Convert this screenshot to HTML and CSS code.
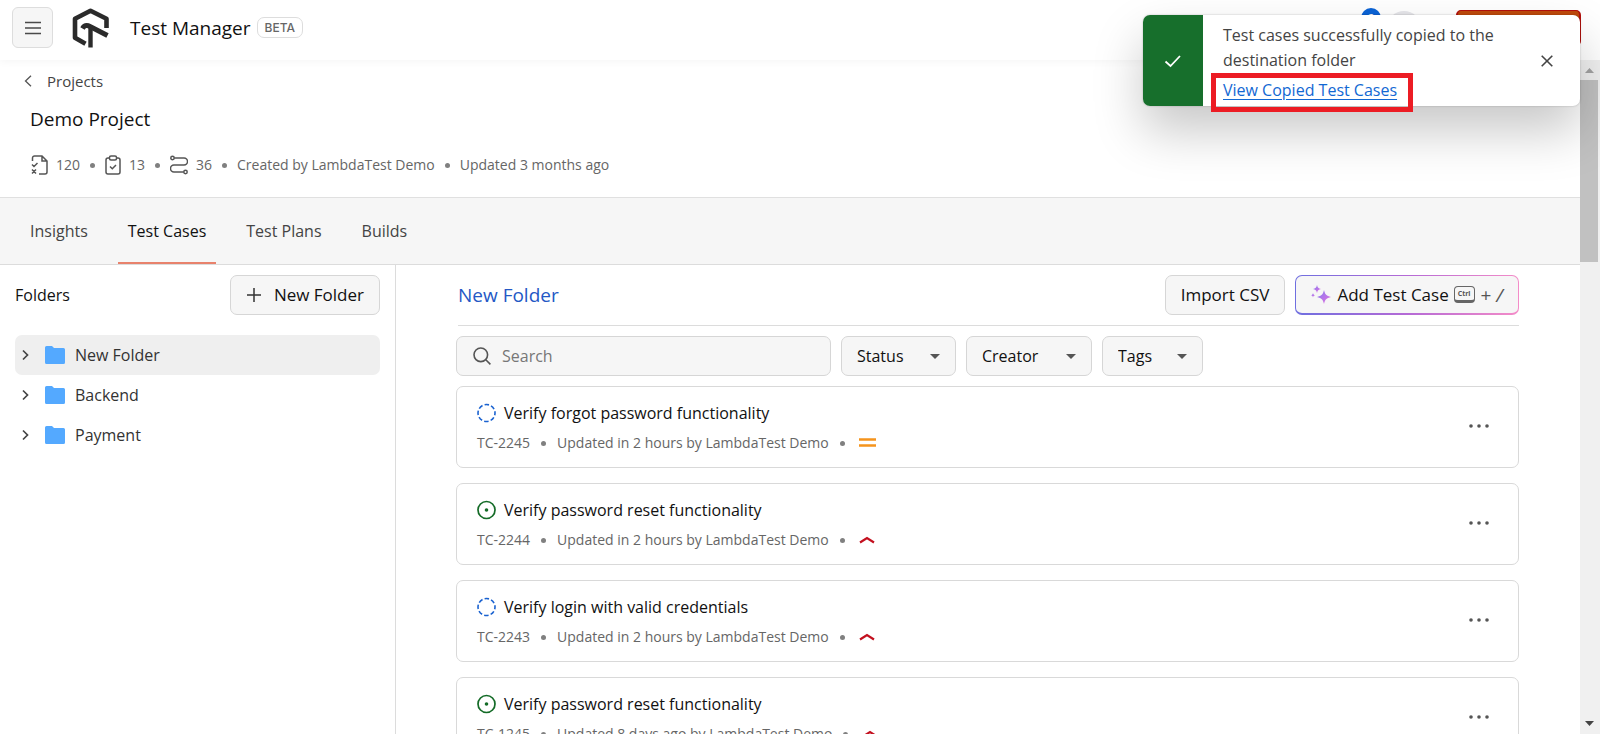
FILE: index.html
```html
<!DOCTYPE html>
<html lang="en">
<head>
<meta charset="utf-8">
<title>Test Manager</title>
<link rel="stylesheet" href="styles.css">
</head>
<body>
<svg class="defs" width="0" height="0" aria-hidden="true">
  <defs>
    <linearGradient id="spark" x1="0" y1="0" x2="1" y2="1">
      <stop offset="0" stop-color="#7f7bf0"/>
      <stop offset="1" stop-color="#ea6fe0"/>
    </linearGradient>
    <symbol id="chevron" viewBox="0 0 8 12"><path d="M1 1.500 5.500 6 1 10.500" fill="none" stroke="#444" stroke-width="1.700"/></symbol>
    <symbol id="folder" viewBox="0 0 20 18"><path d="M1.500 0H7l2 2h9.500A1.500 1.500 0 0 1 20 3.500v13a1.500 1.500 0 0 1-1.500 1.500h-17A1.500 1.500 0 0 1 0 16.500v-15A1.500 1.500 0 0 1 1.500 0z" fill="#54a9ff"/></symbol>
    <symbol id="draft" viewBox="0 0 20 20"><circle cx="9.500" cy="10" r="8.500" fill="none" stroke="#1a62d0" stroke-width="1.600" stroke-dasharray="4.450 2.230" stroke-dashoffset="2.200"/></symbol>
    <symbol id="live" viewBox="0 0 20 20"><circle cx="9.500" cy="10" r="8.500" fill="none" stroke="#146b27" stroke-width="1.700"/><circle cx="9.500" cy="10" r="1.800" fill="#146b27"/></symbol>
    <symbol id="high" viewBox="0 0 18 10"><path d="M1 7.500 8 3l7 4.500" fill="none" stroke="#c3101f" stroke-width="2.200"/></symbol>
    <symbol id="medium" viewBox="0 0 18 10"><path d="M0 1.500h17M0 7.500h17" stroke="#f5941d" stroke-width="2.400"/></symbol>
    <symbol id="dots" viewBox="0 0 20 4"><circle cx="2" cy="2" r="1.800"/><circle cx="10" cy="2" r="1.800"/><circle cx="18" cy="2" r="1.800"/></symbol>
  </defs>
</svg>

<header class="topbar">
  <button class="menu-btn" aria-label="Menu"><svg width="16" height="14" viewBox="0 0 16 14"><path d="M0 1.500h16M0 7h16M0 12.500h16" stroke="#4a4a4a" stroke-width="1.300"/></svg></button>
  <svg class="logo" width="38" height="40" viewBox="0 0 38 40" fill="none" stroke="#2b2b2b">
    <path d="M34.500 20V10.800L18.500 2.800 3 10.800v19L13.500 35.800" stroke-width="4.600" stroke-linejoin="round"/>
    <path d="M18.500 39.500V20" stroke-width="4.400"/>
    <path d="M10.500 20.500c2-3.500 4.500-3.500 8-1.800l17 8.800" stroke-width="5"/>
  </svg>
  <span class="brand">Test Manager</span>
  <span class="beta">BETA</span>
  <div class="account">
    <span class="badge">2</span>
    <span class="avatar"></span>
    <button class="cta" aria-label="Upgrade"></button>
  </div>
</header>

<div class="viewport">
  <div class="page">
    <section class="project">
      <a class="back" href="#"><svg width="8" height="12" viewBox="0 0 8 12"><path d="M7 .8 1.500 6 7 11.200" fill="none" stroke="#555" stroke-width="1.300"/></svg>Projects</a>
      <h1>Demo Project</h1>
      <div class="facts">
        <span class="fact"><svg width="18" height="20" viewBox="0 0 18 20" fill="none" stroke="#555" stroke-width="1.500"><path d="M2.500 6V3a2 2 0 0 1 2-2H12l5 5v11a2 2 0 0 1-2 2H9M12 1v5h5M2 9.500l2 2L7.500 8M2 14.500l4 4M6 14.500l-4 4"/></svg>120</span>
        <i class="dot"></i>
        <span class="fact"><svg width="16" height="20" viewBox="0 0 16 20" fill="none" stroke="#555" stroke-width="1.500"><rect x="1" y="3" width="14" height="16" rx="2"/><rect x="4.500" y="1" width="7" height="4" rx="1.500" fill="#fff"/><path d="m5 11.500 2.300 2.300L11 10"/></svg>13</span>
        <i class="dot"></i>
        <span class="fact"><svg width="18" height="20" viewBox="0 0 18 20" fill="none" stroke="#555" stroke-width="1.500"><circle cx="2.500" cy="3" r="1.700"/><circle cx="15.500" cy="17" r="1.700"/><path d="M4.200 3H14a3.500 3.500 0 0 1 0 7H4a3.500 3.500 0 0 0 0 7h9.800"/></svg>36</span>
        <i class="dot"></i>
        <span>Created by LambdaTest Demo</span>
        <i class="dot"></i>
        <span>Updated 3 months ago</span>
      </div>
    </section>

    <nav class="tabs">
      <a href="#">Insights</a>
      <a href="#" class="active" aria-current="page">Test Cases</a>
      <a href="#">Test Plans</a>
      <a href="#">Builds</a>
    </nav>

    <div class="split">
      <aside class="folders">
        <div class="folders-head">
          <h2>Folders</h2>
          <button class="btn new-folder"><svg width="16" height="16" viewBox="0 0 16 16"><path d="M8 1v14M1 8h14" stroke="#333" stroke-width="1.500"/></svg>New Folder</button>
        </div>
        <button class="folder selected"><svg width="8" height="12"><use href="#chevron"/></svg><svg width="20" height="18"><use href="#folder"/></svg>New Folder</button>
        <button class="folder"><svg width="8" height="12"><use href="#chevron"/></svg><svg width="20" height="18"><use href="#folder"/></svg>Backend</button>
        <button class="folder"><svg width="8" height="12"><use href="#chevron"/></svg><svg width="20" height="18"><use href="#folder"/></svg>Payment</button>
      </aside>

      <main class="cases">
        <div class="cases-head">
          <a class="crumb" href="#">New Folder</a>
          <button class="btn">Import CSV</button>
          <button class="btn add"><svg width="20" height="20" viewBox="0 0 20 20" fill="url(#spark)"><path d="M13 5c1 4.500 2.500 6 7 7-4.500 1-6 2.500-7 7-1-4.500-2.500-6-7-7 4.500-1 6-2.500 7-7z"/><path d="M6 0c.6 2.600 1.400 3.400 4 4-2.600.6-3.400 1.400-4 4-.6-2.600-1.400-3.400-4-4 2.600-.6 3.400-1.400 4-4z"/><path d="M2 8c.3 1.500.8 2 2.200 2.300-1.400.3-1.900.8-2.200 2.200-.3-1.400-.8-1.900-2.200-2.200C1.200 10 1.700 9.500 2 8z"/></svg>Add Test Case<kbd>Ctrl</kbd><span class="keys">+ <em>/</em></span></button>
        </div>

        <div class="filters">
          <label class="search"><svg width="18" height="18" viewBox="0 0 18 18" fill="none" stroke="#555" stroke-width="1.600"><circle cx="7.800" cy="7.800" r="6.800"/><path d="m12.800 12.800 4.600 4.600"/></svg><input type="search" placeholder="Search" aria-label="Search"></label>
          <label class="pick"><select class="status" aria-label="Status"><option>Status</option></select></label>
          <label class="pick"><select class="creator" aria-label="Creator"><option>Creator</option></select></label>
          <label class="pick"><select class="tags" aria-label="Tags"><option>Tags</option></select></label>
        </div>

        <article class="case">
          <div>
            <h3><svg width="20" height="20"><use href="#draft"/></svg>Verify forgot password functionality</h3>
            <p><span>TC-2245</span><i class="dot"></i><span>Updated in 2 hours by LambdaTest Demo</span><i class="dot"></i><svg width="18" height="10"><use href="#medium"/></svg></p>
          </div>
          <button class="more" aria-label="More"><svg width="20" height="4"><use href="#dots"/></svg></button>
        </article>
        <article class="case">
          <div>
            <h3><svg width="20" height="20"><use href="#live"/></svg>Verify password reset functionality</h3>
            <p><span>TC-2244</span><i class="dot"></i><span>Updated in 2 hours by LambdaTest Demo</span><i class="dot"></i><svg width="18" height="10"><use href="#high"/></svg></p>
          </div>
          <button class="more" aria-label="More"><svg width="20" height="4"><use href="#dots"/></svg></button>
        </article>
        <article class="case">
          <div>
            <h3><svg width="20" height="20"><use href="#draft"/></svg>Verify login with valid credentials</h3>
            <p><span>TC-2243</span><i class="dot"></i><span>Updated in 2 hours by LambdaTest Demo</span><i class="dot"></i><svg width="18" height="10"><use href="#high"/></svg></p>
          </div>
          <button class="more" aria-label="More"><svg width="20" height="4"><use href="#dots"/></svg></button>
        </article>
        <article class="case">
          <div>
            <h3><svg width="20" height="20"><use href="#live"/></svg>Verify password reset functionality</h3>
            <p><span>TC-1245</span><i class="dot"></i><span>Updated 8 days ago by LambdaTest Demo</span><i class="dot"></i><svg width="18" height="10"><use href="#high"/></svg></p>
          </div>
          <button class="more" aria-label="More"><svg width="20" height="4"><use href="#dots"/></svg></button>
        </article>
      </main>
    </div>
  </div>
  <div class="scrollbar" aria-hidden="true">
    <svg width="20" height="20" viewBox="0 0 20 20"><path d="m5 13 4.500-5 4.500 5z" fill="#a3a3a3"/></svg>
    <div class="thumb"></div>
    <svg class="down" width="20" height="20" viewBox="0 0 20 20"><path d="m5 7 4.500 5L14 7z" fill="#444"/></svg>
  </div>
</div>

<div class="toast" role="status">
  <div class="toast-icon"><svg width="18" height="14" viewBox="0 0 18 14"><path d="m1.500 7.500 5 4.500L16 2" fill="none" stroke="#fff" stroke-width="1.800"/></svg></div>
  <div class="toast-body">
    <div>Test cases successfully copied to the destination folder</div>
    <a href="#">View Copied Test Cases</a>
  </div>
  <button class="close" aria-label="Close"><svg width="12" height="12" viewBox="0 0 12 12"><path d="m.7.700 10.600 10.600M11.300.700.7 11.300" stroke="#444" stroke-width="1.600"/></svg></button>
</div>
</body>
</html>
```
FILE: styles.css
```css
* { box-sizing: border-box; }
body {
  margin: 0;
  height: 100vh;
  padding-bottom: 2px;
  display: flex;
  flex-direction: column;
  overflow: hidden;
  background: #fff;
  color: #111;
  font: 400 16px/24px "Open Sans", "Noto Sans", sans-serif;
}
h1, h2, h3, p { margin: 0; font-weight: 500; }
a { color: inherit; text-decoration: none; }
button, input, select { font: inherit; color: inherit; }
button { cursor: pointer; }
svg { flex: none; display: block; }
.defs { position: absolute; }

.topbar {
  flex: none;
  height: 60px;
  padding: 0 19px 5px 12px;
  display: flex;
  align-items: center;
  box-shadow: 0 2px 8px rgba(0, 0, 0, .04);
}
.menu-btn {
  width: 41px;
  height: 41px;
  display: grid;
  place-items: center;
  padding: 0;
  border: 1px solid #ddd;
  border-radius: 6px;
  background: #f6f6f6;
}
.logo { margin-left: 19px; }
.brand { margin-left: 20px; font-size: 19px; }
.beta {
  margin-left: 6px;
  padding: 0 7px;
  border: 1px solid #ddd;
  border-radius: 7px;
  color: #666;
  font: 500 12px/19px Inter, sans-serif;
}
.account { margin-left: auto; display: flex; align-items: center; }
.badge {
  width: 20px;
  height: 20px;
  margin-bottom: 20px;
  border-radius: 50%;
  background: #0b63d6;
  color: #fff;
  font: 700 10px/20px "Open Sans", sans-serif;
  text-align: center;
}
.avatar { width: 34px; height: 34px; margin-left: 6px; border-radius: 50%; background: #e6e6ea; }
.cta {
  width: 125px;
  height: 36px;
  margin-left: 35px;
  border: 2px solid #b3100c;
  border-top-width: 1px;
  border-radius: 5px;
  background: #bf4a0c;
}

.viewport { flex: 1; min-height: 0; display: flex; }
.page { flex: 1; min-width: 0; display: flex; flex-direction: column; }

.project { flex: none; padding: 9px 30px 20px; border-bottom: 1px solid #e0e0e0; }
.back { display: flex; width: max-content; align-items: center; gap: 15px; margin-left: -6px; color: #444; font-size: 15px; }
.project h1 { margin-top: 14px; font-size: 19px; }
.facts { display: flex; align-items: center; gap: 10px; margin-top: 22px; color: #666; font-size: 14px; }
.fact { display: flex; align-items: center; gap: 8px; }
.dot { flex: none; width: 5px; height: 5px; border-radius: 50%; background: #808080; }

.tabs {
  flex: none;
  display: flex;
  gap: 20px;
  padding: 0 20px;
  border-bottom: 1px solid #dcdcdc;
  background: #f6f6f6;
  color: #444;
}
.tabs a { padding: 21px 10px 19px; border-bottom: 2px solid transparent; }
.tabs .active { color: #111; border-color: #e8826c; }

.split { flex: 1; min-height: 0; display: flex; overflow: hidden; }
.folders { flex: none; width: 396px; padding: 10px 15px; border-right: 1px solid #dcdcdc; }
.folders-head { display: flex; align-items: center; justify-content: space-between; margin-bottom: 20px; }
.folders-head h2 { font-size: 16px; }
.btn {
  height: 40px;
  display: flex;
  align-items: center;
  padding: 0 15px;
  border: 1px solid #d6d6d6;
  border-radius: 7px;
  background: #f6f6f6;
  font-size: 17px;
  white-space: nowrap;
}
.new-folder { gap: 12px; font-weight: 500; }
.folder {
  width: 100%;
  height: 40px;
  display: flex;
  align-items: center;
  padding: 0 7px;
  border: 0;
  border-radius: 7px;
  background: none;
  color: #333;
}
.folder svg + svg { margin: 0 10px 0 15px; }
.selected { background: #efefef; }

.cases { flex: 1; min-width: 0; padding: 10px 61px 0 60px; overflow: hidden; }
.cases-head { display: flex; gap: 10px; align-items: center; padding-bottom: 10px; margin-left: 2px; border-bottom: 1px solid #dcdcdc; }
.crumb { margin-right: auto; color: #2458c5; font-size: 19px; }
.add {
  border: 1px solid transparent;
  border-bottom-width: 2px;
  background: linear-gradient(#f6f6f6, #f6f6f6) padding-box, linear-gradient(90deg, #6f6fe0, #b56ad6 50%, #f48cc8) border-box;
}
.add > svg { margin-right: 6px; }
kbd {
  margin: 0 6px 0 5px;
  padding: 0 3px;
  border: 1px solid #666;
  border-bottom-width: 3px;
  border-radius: 4px;
  color: #555;
  font: 700 7px/13px "Open Sans", sans-serif;
}
.keys { color: #555; font-size: 19px; }

.filters { display: flex; gap: 10px; margin: 10px 0; }
.search {
  width: 375px;
  height: 40px;
  display: flex;
  align-items: center;
  gap: 11px;
  padding: 0 16px;
  border: 1px solid #d6d6d6;
  border-radius: 7px;
  background: #f6f6f6;
}
.search input { flex: 1; min-width: 0; padding: 0; border: 0; outline: 0; background: none; }
.search input::placeholder { color: #777; opacity: 1; }
.pick { position: relative; }
.pick::after {
  content: "";
  position: absolute;
  top: 18px;
  right: 16px;
  border: 5px solid transparent;
  border-top-color: #555;
  border-bottom: 0;
  pointer-events: none;
}
.pick select {
  appearance: none;
  height: 40px;
  padding: 0 15px;
  border: 1px solid #d6d6d6;
  border-radius: 7px;
  background: #f6f6f6;
  font-weight: 500;
}
.status { width: 115px; }
.creator { width: 126px; }
.tags { width: 101px; }

.case {
  display: flex;
  align-items: center;
  justify-content: space-between;
  margin-bottom: 15px;
  padding: 14px 29px 12px 20px;
  border: 1px solid #d9d9d9;
  border-radius: 7px;
}
.case h3 { display: flex; align-items: center; gap: 7px; font-size: 16px; }
.case p { display: flex; align-items: center; gap: 11px; margin-top: 6px; color: #666; font-size: 14px; font-weight: 400; }
.case p svg { margin-left: 3px; }
.more { padding: 4px 0 8px; border: 0; background: none; fill: #555; }

.scrollbar { flex: none; width: 20px; display: flex; flex-direction: column; background: #f0f0f0; }
.thumb { width: 18px; height: 182px; background: #c1c1c1; }
.down { margin-top: auto; }

.toast {
  position: absolute;
  top: 15px;
  right: 20px;
  width: 437px;
  min-height: 91px;
  display: flex;
  align-items: stretch;
  border-radius: 7px;
  background: #fff;
  color: #444;
  box-shadow: 0 0 2px rgba(0, 0, 0, .25), 0 25px 50px rgba(0, 0, 0, .22);
}
.toast-icon { width: 60px; display: grid; place-items: center; border-radius: 7px 0 0 7px; background: #176f2c; }
.toast-body { flex: 1; min-width: 0; padding: 8px 0 0 8px; line-height: 25px; }
.toast-body div { padding-left: 12px; }
.toast-body a {
  display: block;
  width: max-content;
  margin-bottom: -6px;
  padding: 0 11px 4px 7px;
  border: 5px solid #ec1c24;
  color: #1268d3;
  text-decoration: underline;
  text-underline-offset: 3px;
}
.close { align-self: center; margin-right: 21px; padding: 6px; border: 0; background: none; }
```
